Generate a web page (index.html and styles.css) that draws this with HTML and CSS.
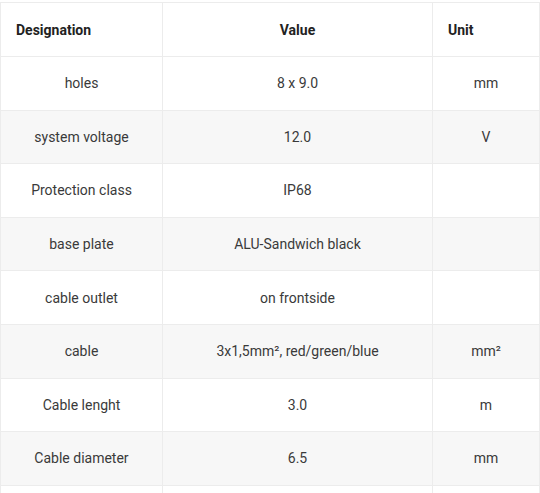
FILE: index.html
```html
<!DOCTYPE html>
<html>
<head>
<meta charset="utf-8">
<link rel="stylesheet" href="styles.css">
</head>
<body>
<div class="wrap">
<table class="spec">
  <colgroup>
    <col class="c1"><col class="c2"><col class="c3">
  </colgroup>
  <thead>
    <tr><th class="left">Designation</th><th>Value</th><th class="left">Unit</th></tr>
  </thead>
  <tbody>
    <tr><td>holes</td><td>8 x 9.0</td><td>mm</td></tr>
    <tr><td>system voltage</td><td>12.0</td><td>V</td></tr>
    <tr><td>Protection class</td><td>IP68</td><td></td></tr>
    <tr><td>base plate</td><td>ALU-Sandwich black</td><td></td></tr>
    <tr><td>cable outlet</td><td>on frontside</td><td></td></tr>
    <tr><td>cable</td><td>3x1,5mm², red/green/blue</td><td>mm²</td></tr>
    <tr><td>Cable lenght</td><td>3.0</td><td>m</td></tr>
    <tr><td>Cable diameter</td><td>6.5</td><td>mm</td></tr>
    <tr><td></td><td></td><td></td></tr>
  </tbody>
</table>
</div>
</body>
</html>
```
FILE: styles.css
```css
html, body {
  margin: 0;
  padding: 0;
  background: #fff;
}
.wrap {
  padding-top: 2px;
  width: 540px;
  overflow: hidden;
}
.spec {
  border-collapse: collapse;
  width: 539px;
  table-layout: fixed;
  font-family: Roboto, "Liberation Sans", sans-serif;
  font-size: 14px;
  color: #3a3a3a;
}
.c1 { width: 162px; }
.c2 { width: 270px; }
.c3 { width: 107px; }
.spec th, .spec td {
  border: 1px solid #ececec;
  height: 52.6px;
  padding: 0 15px;
  text-align: center;
  vertical-align: middle;
}
.spec th {
  height: 53px;
  font-weight: 700;
  color: #222;
}
.spec th.left { text-align: left; }
.spec tbody tr:nth-child(even) td { background: #f7f7f7; }
```
